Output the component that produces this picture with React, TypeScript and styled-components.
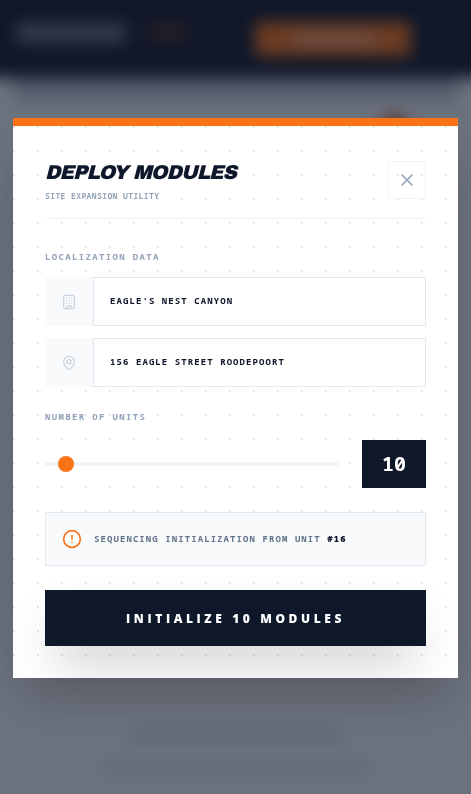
import React, { useState } from 'react';
import styled, { createGlobalStyle } from 'styled-components';
import { Building, CircleAlert, MapPin, X } from 'lucide-react';

const mono = `'Noto Sans Mono', 'DejaVu Sans Mono', monospace`;
const sans = `'Open Sans', 'Noto Sans', sans-serif`;
const display = `'Archivo Black', Inter, sans-serif`;

const GlobalStyle = createGlobalStyle`
  *, *::before, *::after { box-sizing: border-box; }
  html, body, #root { height: 100%; }
  body { margin: 0; background: #f8fafc; font-family: ${sans}; color: #0f172a; }
  button, input { font: inherit; color: inherit; margin: 0; border-radius: 0; }
`;

const Backdrop = styled.div`
  height: 100%;
  overflow: hidden;
`;

const Page = styled.div`
  min-height: 100%;
  display: flex;
  flex-direction: column;
  filter: blur(8px);
`;

const TopBar = styled.header`
  display: flex;
  align-items: center;
  height: 108px;
  margin: -30px -30px 0;
  padding: 30px 90px 0 46px;
  background: #0f172a;
`;

const Smudge = styled.span<{ $w: number; $h: number; $color: string }>`
  display: block;
  width: ${(p) => p.$w}px;
  height: ${(p) => p.$h}px;
  background: ${(p) => p.$color};
`;

const Brand = styled.div`
  display: flex;
  flex: 1;
  gap: 20px;
  margin-bottom: 12px;
`;

const Action = styled.div`
  display: flex;
  align-items: center;
  justify-content: center;
  width: 156px;
  height: 34px;
  background: #f97316;
`;

const Board = styled.div`
  flex: 1;
  margin: 0 13px;
  border-top: 22px solid #bcc2cd;
`;

const BoardBadge = styled.div`
  width: 24px;
  height: 24px;
  margin: 15px 52px 0 auto;
  border-radius: 50%;
  background: #c2410c;
`;

const Footer = styled.footer`
  display: flex;
  flex-direction: column;
  align-items: center;
  gap: 22px;
  padding-bottom: 22px;
`;

const Overlay = styled.div`
  position: fixed;
  inset: 0;
  display: flex;
  align-items: center;
  justify-content: center;
  padding: 15px 13px 13px;
  background: rgba(15, 23, 42, 0.6);
`;

const Dialog = styled.section`
  width: 100%;
  max-width: 512px;
  padding: 32px;
  overflow: hidden;
  border-top: 8px solid #f97316;
  background: #fff radial-gradient(circle at 1px 1px, #e5e7eb 1px, transparent 0) 0 0 / 24px 24px;
  box-shadow: 0 25px 50px -12px rgba(0, 0, 0, 0.25);
`;

const DialogHead = styled.header`
  display: flex;
  align-items: center;
  justify-content: space-between;
  padding-bottom: 16px;
  border-bottom: 1px solid #f1f5f9;
  margin-bottom: 32px;
`;

const Title = styled.h2`
  margin: 0;
  font-family: ${display};
  font-size: 20px;
  font-weight: 400;
  font-style: italic;
  line-height: 28px;
  letter-spacing: -0.05em;
  text-transform: uppercase;
`;

const Subtitle = styled.p`
  margin: 4px 0 0;
  font-family: ${mono};
  font-size: 8px;
  font-weight: 700;
  line-height: 12px;
  letter-spacing: 0.05em;
  text-transform: uppercase;
  color: #94a3b8;
`;

const CloseButton = styled.button`
  display: flex;
  padding: 8px;
  border: 1px solid #f1f5f9;
  background: transparent;
  color: #94a3b8;
  cursor: pointer;
`;

const Group = styled.div<{ $gap: number }>`
  display: flex;
  flex-direction: column;
  gap: ${(p) => p.$gap}px;
  margin-bottom: 24px;
`;

const Caption = styled.label`
  font-family: ${mono};
  font-size: 9px;
  font-weight: 700;
  line-height: 12px;
  letter-spacing: 0.15em;
  text-transform: uppercase;
  color: #94a3b8;
`;

const FieldList = styled.div`
  display: flex;
  flex-direction: column;
  gap: 12px;
`;

const Field = styled.div`
  display: flex;
  height: 49px;
`;

const FieldIcon = styled.label`
  display: flex;
  align-items: center;
  justify-content: center;
  width: 48px;
  background: #f8fafc;
  color: #cbd5e1;
`;

const FieldInput = styled.input`
  flex: 1;
  min-width: 0;
  padding: 0 16px 2px;
  border: 1px solid #e2e8f0;
  background: #fff;
  font-family: ${mono};
  font-size: 9px;
  font-weight: 700;
  letter-spacing: 0.12em;
  text-transform: uppercase;
  outline: none;
`;

const SliderRow = styled.div`
  display: flex;
  align-items: center;
  gap: 24px;
`;

const Slider = styled.input`
  flex: 1;
  min-width: 0;
  height: 4px;
  appearance: none;
  background: #f1f5f9;
  cursor: pointer;

  &::-webkit-slider-thumb {
    appearance: none;
    width: 16px;
    height: 16px;
    border-radius: 50%;
    background: #f97316;
  }
`;

const Count = styled.output`
  width: 64px;
  background: #0f172a;
  color: #fff;
  font-family: ${mono};
  font-size: 20px;
  font-weight: 700;
  line-height: 48px;
  text-align: center;
`;

const Notice = styled.div`
  display: flex;
  align-items: center;
  gap: 12px;
  height: 54px;
  padding: 0 16px;
  margin-bottom: 24px;
  border: 1px solid #e2e8f0;
  background: #f8fafc;
  color: #f97316;
`;

const NoticeText = styled.p`
  margin: 0;
  padding-bottom: 2px;
  font-family: ${mono};
  font-size: 9px;
  font-weight: 700;
  letter-spacing: 0.12em;
  text-transform: uppercase;
  color: #64748b;

  strong { color: #0f172a; }
`;

const SubmitButton = styled.button`
  display: block;
  width: 100%;
  height: 56px;
  border: 0;
  background: #0f172a;
  color: #fff;
  font-size: 12px;
  font-weight: 900;
  letter-spacing: 0.3em;
  text-transform: uppercase;
  box-shadow: 0 25px 50px -12px rgba(0, 0, 0, 0.25);
  cursor: pointer;
`;

export default function App() {
  const [name, setName] = useState("Eagle's Nest Canyon");
  const [address, setAddress] = useState('156 Eagle Street Roodepoort');
  const [units, setUnits] = useState(10);

  return (
    <>
      <GlobalStyle />
      <Backdrop aria-hidden="true">
        <Page>
          <TopBar>
            <Brand>
              <Smudge $w={110} $h={20} $color="#6b7080" />
              <Smudge $w={44} $h={18} $color="#4a2a24" />
            </Brand>
            <Action>
              <Smudge $w={84} $h={12} $color="#f5a675" />
            </Action>
          </TopBar>
          <Board>
            <BoardBadge />
          </Board>
          <Footer>
            <Smudge $w={208} $h={10} $color="#d0d7e2" />
            <Smudge $w={264} $h={10} $color="#d7deeb" />
          </Footer>
        </Page>
      </Backdrop>
      <Overlay>
        <Dialog role="dialog" aria-modal="true" aria-labelledby="deploy-title">
          <DialogHead>
            <div>
              <Title id="deploy-title">Deploy Modules</Title>
              <Subtitle>Site Expansion Utility</Subtitle>
            </div>
            <CloseButton type="button" aria-label="Close">
              <X size={20} />
            </CloseButton>
          </DialogHead>
          <Group $gap={14}>
            <Caption htmlFor="site-name">Localization Data</Caption>
            <FieldList>
              <Field>
                <FieldIcon htmlFor="site-name" aria-label="Site name">
                  <Building size={16} />
                </FieldIcon>
                <FieldInput id="site-name" value={name} onChange={(e) => setName(e.target.value)} />
              </Field>
              <Field>
                <FieldIcon htmlFor="site-address" aria-label="Site address">
                  <MapPin size={16} />
                </FieldIcon>
                <FieldInput id="site-address" value={address} onChange={(e) => setAddress(e.target.value)} />
              </Field>
            </FieldList>
          </Group>
          <Group $gap={17}>
            <Caption htmlFor="unit-count">Number of Units</Caption>
            <SliderRow>
              <Slider
                id="unit-count"
                type="range"
                min={1}
                max={200}
                value={units}
                onChange={(e) => setUnits(Number(e.target.value))}
              />
              <Count htmlFor="unit-count">{units}</Count>
            </SliderRow>
          </Group>
          <Notice>
            <CircleAlert size={20} />
            <NoticeText>
              Sequencing initialization from unit <strong>#16</strong>
            </NoticeText>
          </Notice>
          <SubmitButton type="button">Initialize {units} Modules</SubmitButton>
        </Dialog>
      </Overlay>
    </>
  );
}
